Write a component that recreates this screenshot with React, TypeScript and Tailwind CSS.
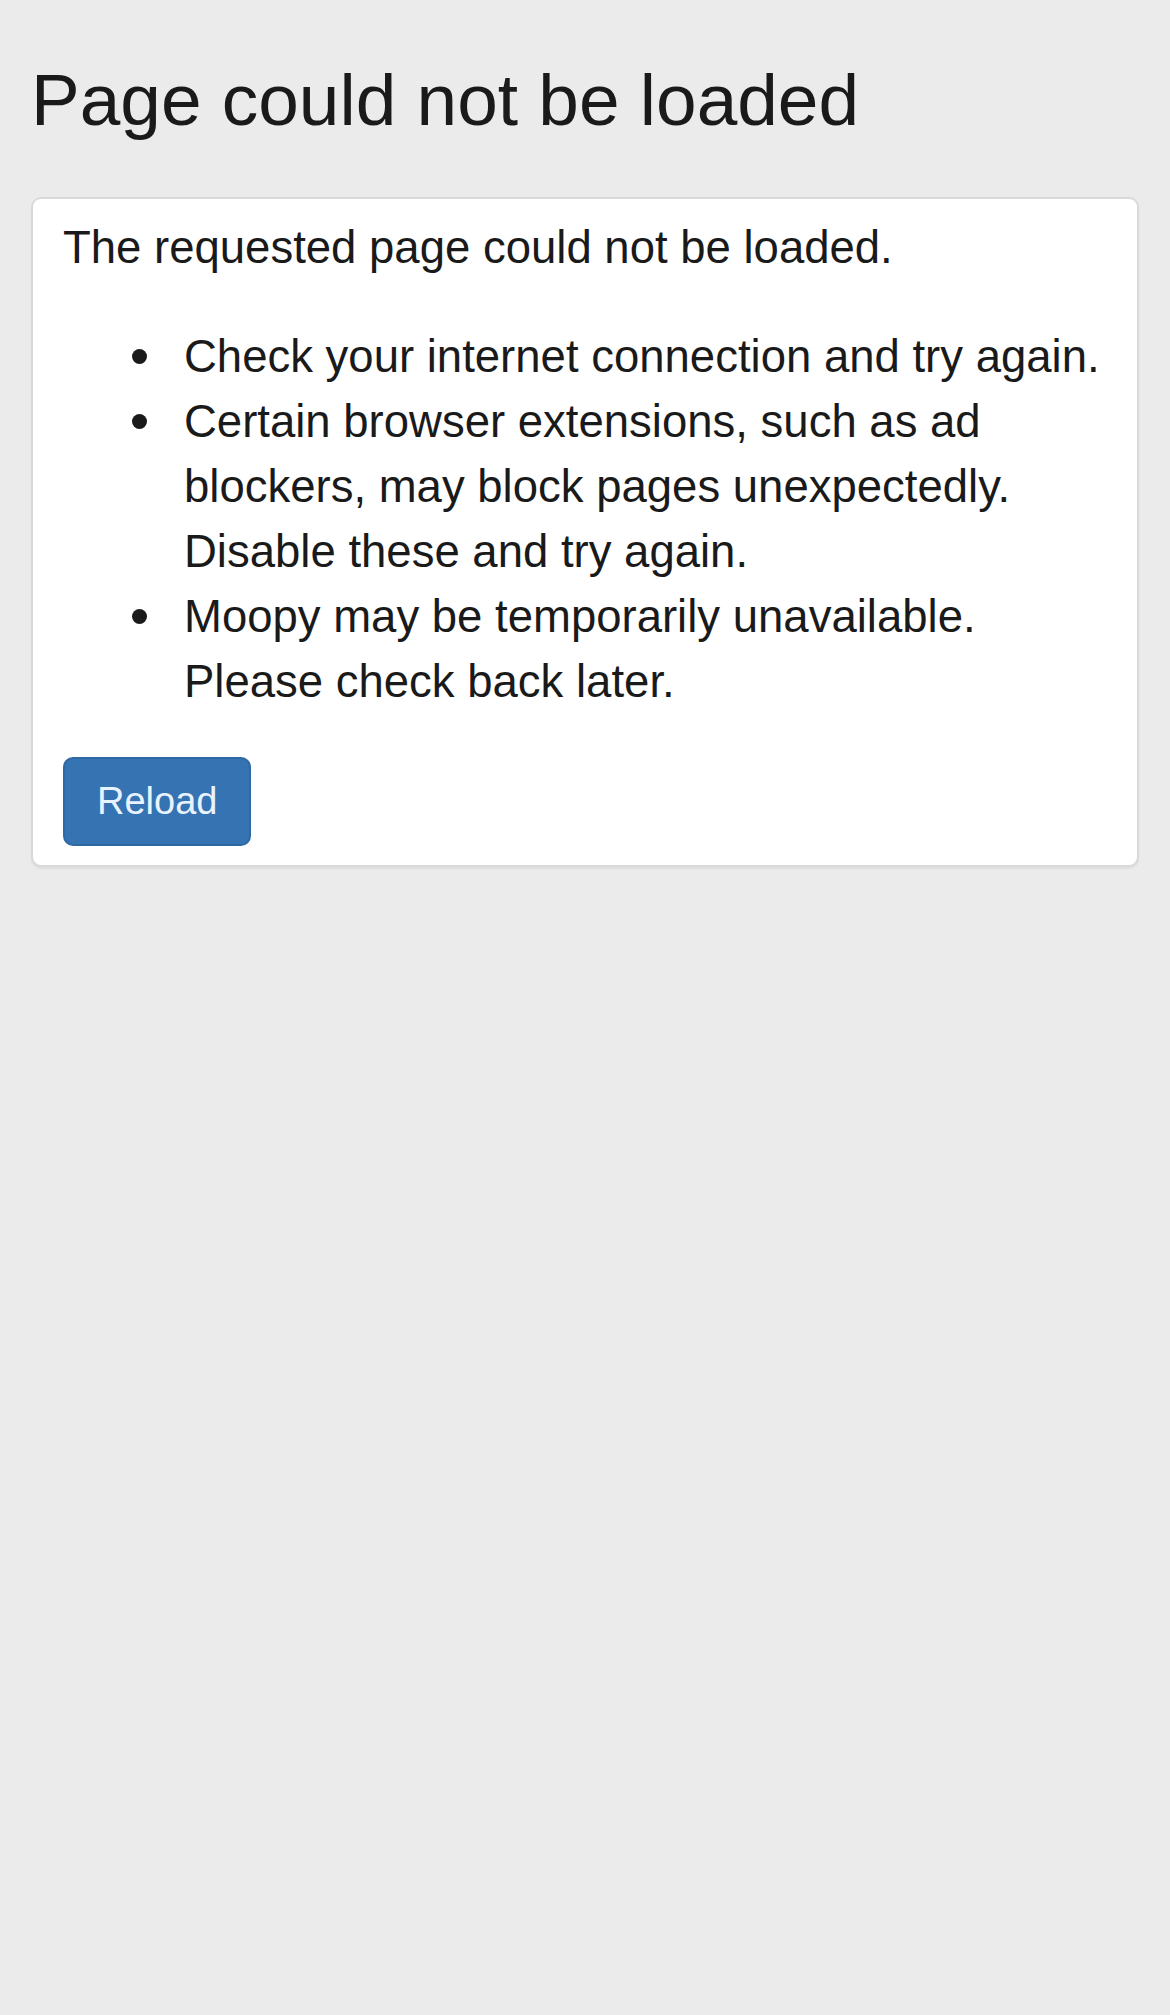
import React from 'react';

const tips: string[] = [
  'Check your internet connection and try again.',
  'Certain browser extensions, such as ad blockers, may block pages unexpectedly. Disable these and try again.',
  'Moopy may be temporarily unavailable. Please check back later.',
];

export default function App() {
  return (
    <div className="min-h-[2015px] bg-[#ebebeb] px-[31px] pt-[60px] text-[#1a1a1a] font-['Liberation_Sans',Arial,sans-serif]">
      <h1 className="text-[73px] leading-[80px] font-normal">Page could not be loaded</h1>

      <div className="mt-[57px] bg-white border-2 border-[#d9d9d9] rounded-[10px] shadow-[0_2px_2px_rgba(0,0,0,0.05)] px-[30px] pt-[17px] pb-[19px]">
        <p className="text-[45.5px] leading-[64px]">The requested page could not be loaded.</p>

        <ul className="mt-[44px] text-[45.5px] leading-[65px]">
          {tips.map((tip, i) => (
            <li key={i} className="flex">
              <span className="shrink-0 w-[121px] flex justify-end pr-[37px] pt-[25px]">
                <span className="w-[15px] h-[15px] rounded-full bg-[#1a1a1a]" />
              </span>
              <span>{tip}</span>
            </li>
          ))}
        </ul>

        <button className="mt-[43px] h-[89px] px-[32px] flex items-center bg-[#3573b2] border-2 border-[#2e69a3] rounded-[10px] text-[38px] text-[#e8f3ff]">
          Reload
        </button>
      </div>
    </div>
  );
}
